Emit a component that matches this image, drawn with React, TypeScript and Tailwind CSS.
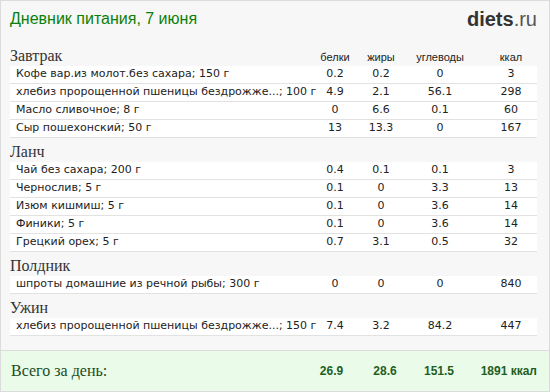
const meals = [
  {
    title: 'Завтрак',
    items: [
      ['Кофе вар.из молот.без сахара; 150 г', '0.2', '0.2', '0', '3'],
      ['хлебиз пророщенной пшеницы бездрожже...; 100 г', '4.9', '2.1', '56.1', '298'],
      ['Масло сливочное; 8 г', '0', '6.6', '0.1', '60'],
      ['Сыр пошехонский; 50 г', '13', '13.3', '0', '167'],
    ],
  },
  {
    title: 'Ланч',
    items: [
      ['Чай без сахара; 200 г', '0.4', '0.1', '0.1', '3'],
      ['Чернослив; 5 г', '0.1', '0', '3.3', '13'],
      ['Изюм кишмиш; 5 г', '0.1', '0', '3.6', '14'],
      ['Финики; 5 г', '0.1', '0', '3.6', '14'],
      ['Грецкий орех; 5 г', '0.7', '3.1', '0.5', '32'],
    ],
  },
  {
    title: 'Полдник',
    items: [['шпроты домашние из речной рыбы; 300 г', '0', '0', '0', '840']],
  },
  {
    title: 'Ужин',
    items: [['хлебиз пророщенной пшеницы бездрожже...; 150 г', '7.4', '3.2', '84.2', '447']],
  },
]

const serif = "font-['Liberation_Serif',serif]"
const verdana = "font-['DejaVu_Sans',sans-serif]"

export default function App() {
  return (
    <div className="flex h-[392px] w-[550px] flex-col border border-[#dcdcdc] bg-[#f7f7f7] font-['Liberation_Sans',Arial,sans-serif]">
      <header className="flex h-[41px] items-start justify-between pl-[9px] pr-[12px] pt-[8px]">
        <h1 className="text-[16px] leading-[20px] text-[#0a800a]">Дневник питания, 7 июня</h1>
        <div className="mt-[-2px] text-[20px] leading-[24px] text-[#333]">
          <span className="font-bold">diets</span>
          <span className="text-[#555]">.ru</span>
        </div>
      </header>

      <main className="pl-[9px] pr-[12px]">
        {meals.map((meal, i) => (
          <section key={meal.title}>
            <div className="flex h-[24px] items-end">
              <div className="flex w-full items-baseline">
                <h2 className={`flex-1 text-[16px] leading-[20px] text-[#333] ${serif}`}>{meal.title}</h2>
                {i === 0 && (
                  <div className="flex text-[11px] text-[#222]">
                    <span className="w-[46px] text-center">белки</span>
                    <span className="w-[46px] text-center">жиры</span>
                    <span className="w-[72px] text-center">углеводы</span>
                    <span className="w-[61px] pl-[9px] text-center">ккал</span>
                  </div>
                )}
              </div>
            </div>
            {meal.items.map((row, j) => (
              <div
                key={j}
                className={`flex h-[18px] items-center border-b border-[#e2e2e2] bg-white text-[11px] text-[#222] ${verdana}`}
              >
                <span className="min-w-0 flex-1 overflow-visible whitespace-nowrap pl-[6px]">{row[0]}</span>
                <span className="w-[46px] text-center">{row[1]}</span>
                <span className="w-[46px] text-center">{row[2]}</span>
                <span className="w-[72px] text-center">{row[3]}</span>
                <span className="w-[61px] pl-[9px] text-center">{row[4]}</span>
              </div>
            ))}
          </section>
        ))}
      </main>

      <footer className="mt-auto flex h-[41px] items-center border-t border-[#dcdcdc] bg-[#eafbe9] pl-[10px] pr-[12px]">
        <span className={`flex-1 text-[16px] text-[#1a4d1a] ${serif}`}>Всего за день:</span>
        <div className="flex text-[12px] font-bold text-[#1f5f1f]">
          <span className="w-[45px] text-center">26.9</span>
          <span className="w-[62px] text-center">28.6</span>
          <span className="w-[46px] text-center">151.5</span>
          <span className="w-[75px] text-right">1891 ккал</span>
        </div>
      </footer>
    </div>
  )
}
